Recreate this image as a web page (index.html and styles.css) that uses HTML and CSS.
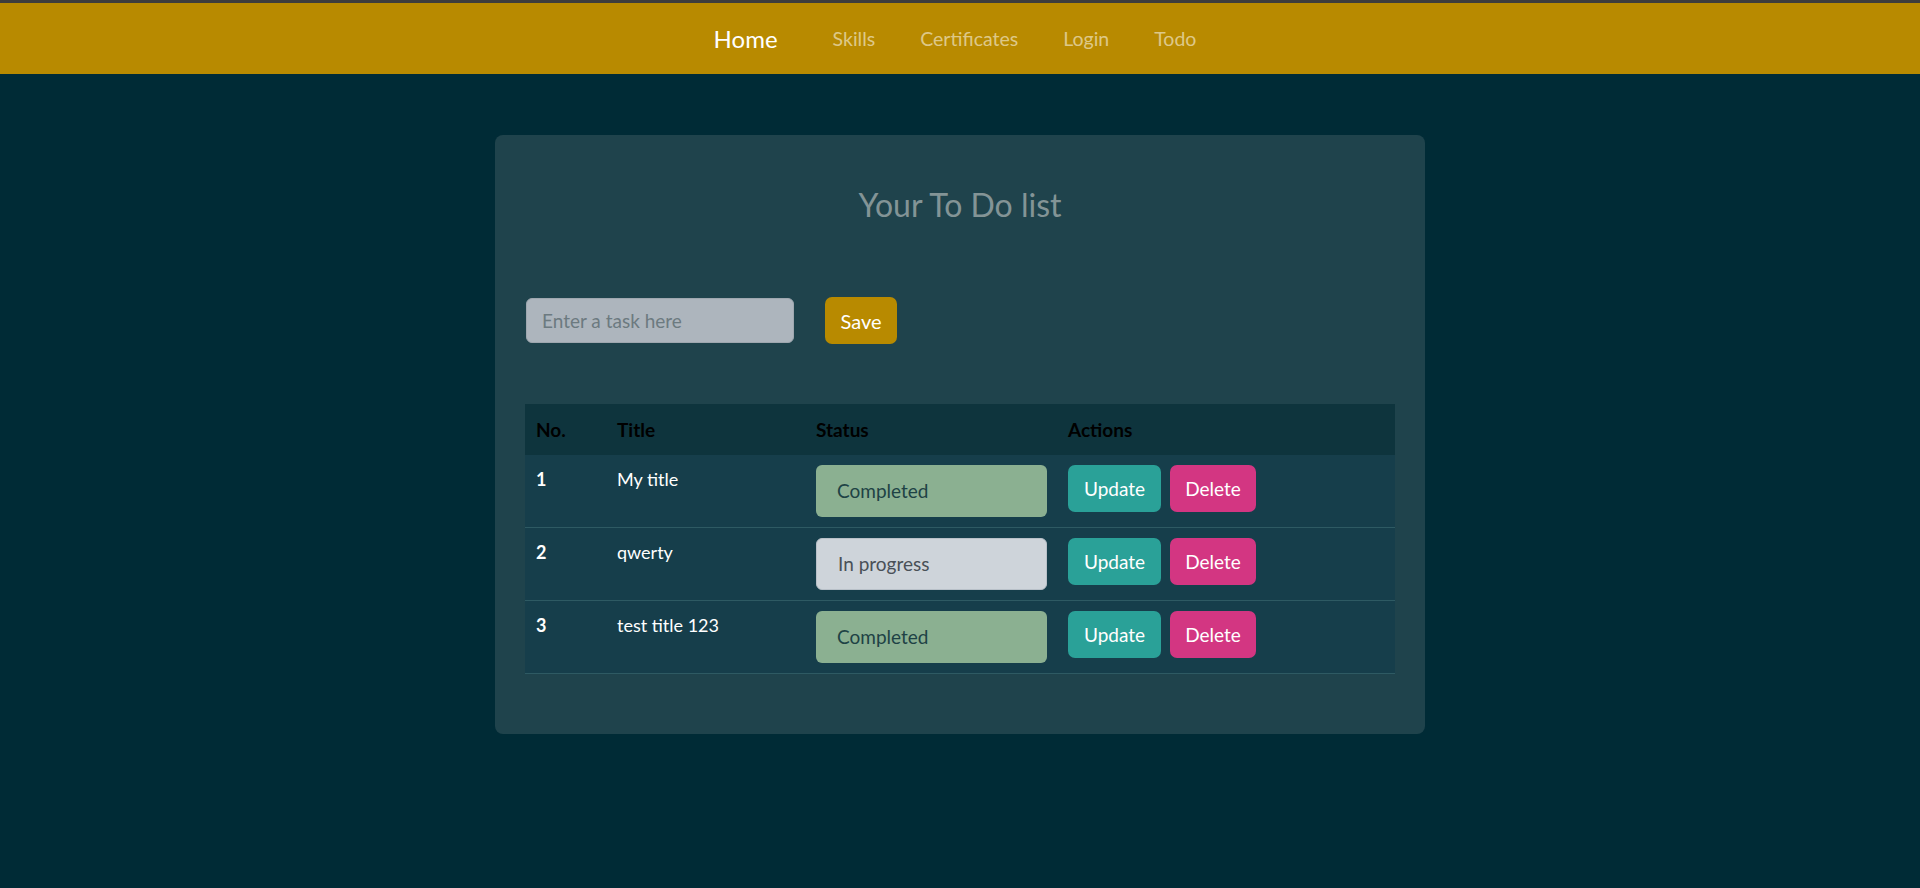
FILE: index.html
```html
<!DOCTYPE html>
<html lang="en">
<head>
<meta charset="utf-8">
<title>Todo</title>
<link rel="stylesheet" href="styles.css">
</head>
<body>
<div class="topline"></div>
<nav class="navbar">
  <a class="brand" href="#">Home</a>
  <a class="nav-link" href="#">Skills</a>
  <a class="nav-link" href="#">Certificates</a>
  <a class="nav-link" href="#">Login</a>
  <a class="nav-link" href="#">Todo</a>
</nav>
<main class="page">
  <section class="card">
    <h1 class="card-title">Your To Do list</h1>
    <form class="task-form">
      <input class="task-input" type="text" placeholder="Enter a task here">
      <button class="btn btn-save" type="button">Save</button>
    </form>
    <table class="todo-table">
      <thead>
        <tr>
          <th class="col-no">No.</th>
          <th class="col-title">Title</th>
          <th class="col-status">Status</th>
          <th class="col-actions">Actions</th>
        </tr>
      </thead>
      <tbody>
        <tr>
          <td class="num">1</td>
          <td>My title</td>
          <td><div class="status status-done">Completed</div></td>
          <td><div class="actions"><button class="btn btn-update" type="button">Update</button><button class="btn btn-delete" type="button">Delete</button></div></td>
        </tr>
        <tr>
          <td class="num">2</td>
          <td>qwerty</td>
          <td><div class="status status-progress">In progress</div></td>
          <td><div class="actions"><button class="btn btn-update" type="button">Update</button><button class="btn btn-delete" type="button">Delete</button></div></td>
        </tr>
        <tr>
          <td class="num">3</td>
          <td>test title 123</td>
          <td><div class="status status-done">Completed</div></td>
          <td><div class="actions"><button class="btn btn-update" type="button">Update</button><button class="btn btn-delete" type="button">Delete</button></div></td>
        </tr>
      </tbody>
    </table>
  </section>
</main>
</body>
</html>
```
FILE: styles.css
```css
* { box-sizing: border-box; }
html, body {
  margin: 0;
  padding: 0;
}
body {
  background: #002b36;
  font-family: "Lato", "Liberation Sans", sans-serif;
  color: #ffffff;
  min-height: 888px;
}
.topline {
  height: 3px;
  background: #3d3d3d;
}
.navbar {
  height: 71px;
  background: #b88a00;
  display: flex;
  align-items: center;
  justify-content: center;
  gap: 45px;
  padding-right: 10px;
}
.navbar a {
  text-decoration: none;
}
.brand {
  color: #ffffff;
  font-size: 24px;
  margin-right: 10px;
}
.nav-link {
  color: rgba(255, 255, 255, 0.55);
  font-size: 19.5px;
}
.page {
  padding-top: 61px;
  display: flex;
  justify-content: center;
}
.card {
  width: 930px;
  background: #1f434c;
  border-radius: 8px;
  padding: 30px 30px 60px 30px;
}
.card-title {
  margin: 20px 0 0 0;
  text-align: center;
  font-weight: 400;
  font-size: 32px;
  line-height: 40px;
  color: #839496;
}
.task-form {
  margin-top: 72px;
  display: flex;
  align-items: center;
  gap: 31px;
  padding-left: 1px;
}
.task-input {
  width: 268px;
  height: 45px;
  border: 1px solid #9ea7af;
  border-radius: 6px;
  background: #adb5bd;
  padding: 0 15px;
  font-family: inherit;
  font-size: 19px;
  color: #212529;
  outline: none;
}
.task-input::placeholder {
  color: #6c7a80;
}
.btn {
  border: none;
  border-radius: 7px;
  font-family: inherit;
  font-size: 19px;
  color: #ffffff;
  cursor: pointer;
}
.btn-save {
  width: 72px;
  height: 47px;
  background: #b88a00;
  font-size: 20px;
}
.todo-table {
  margin-top: 60px;
  width: 870px;
  table-layout: fixed;
  border-collapse: collapse;
  font-size: 18px;
}
.todo-table th {
  background: #0e343d;
  color: #000000;
  font-weight: 700;
  font-size: 19px;
  text-align: left;
  height: 51px;
  padding: 0 11px;
  vertical-align: middle;
}
.col-no { width: 81px; }
.col-title { width: 199px; }
.col-status { width: 252px; }
.todo-table td {
  background: #163e4b;
  border-bottom: 1px solid #2e5a63;
  padding: 10px 11px;
  height: 72px;
  vertical-align: top;
  line-height: 28px;
  color: #ffffff;
}
.todo-table td.num {
  font-weight: 700;
}
.status {
  width: 231px;
  height: 52px;
  border-radius: 6px;
  padding: 0 21px;
  display: flex;
  align-items: center;
  font-size: 19px;
}
.status-done {
  background: #8bb091;
  color: #1e4245;
}
.status-progress {
  background: #ced4da;
  border: 1px solid #b8c0c8;
  color: #495057;
}
.actions {
  display: flex;
  gap: 9px;
}
.btn-update {
  width: 93px;
  height: 47px;
  background: #2aa198;
}
.btn-delete {
  width: 86px;
  height: 47px;
  background: #d33682;
}
```
